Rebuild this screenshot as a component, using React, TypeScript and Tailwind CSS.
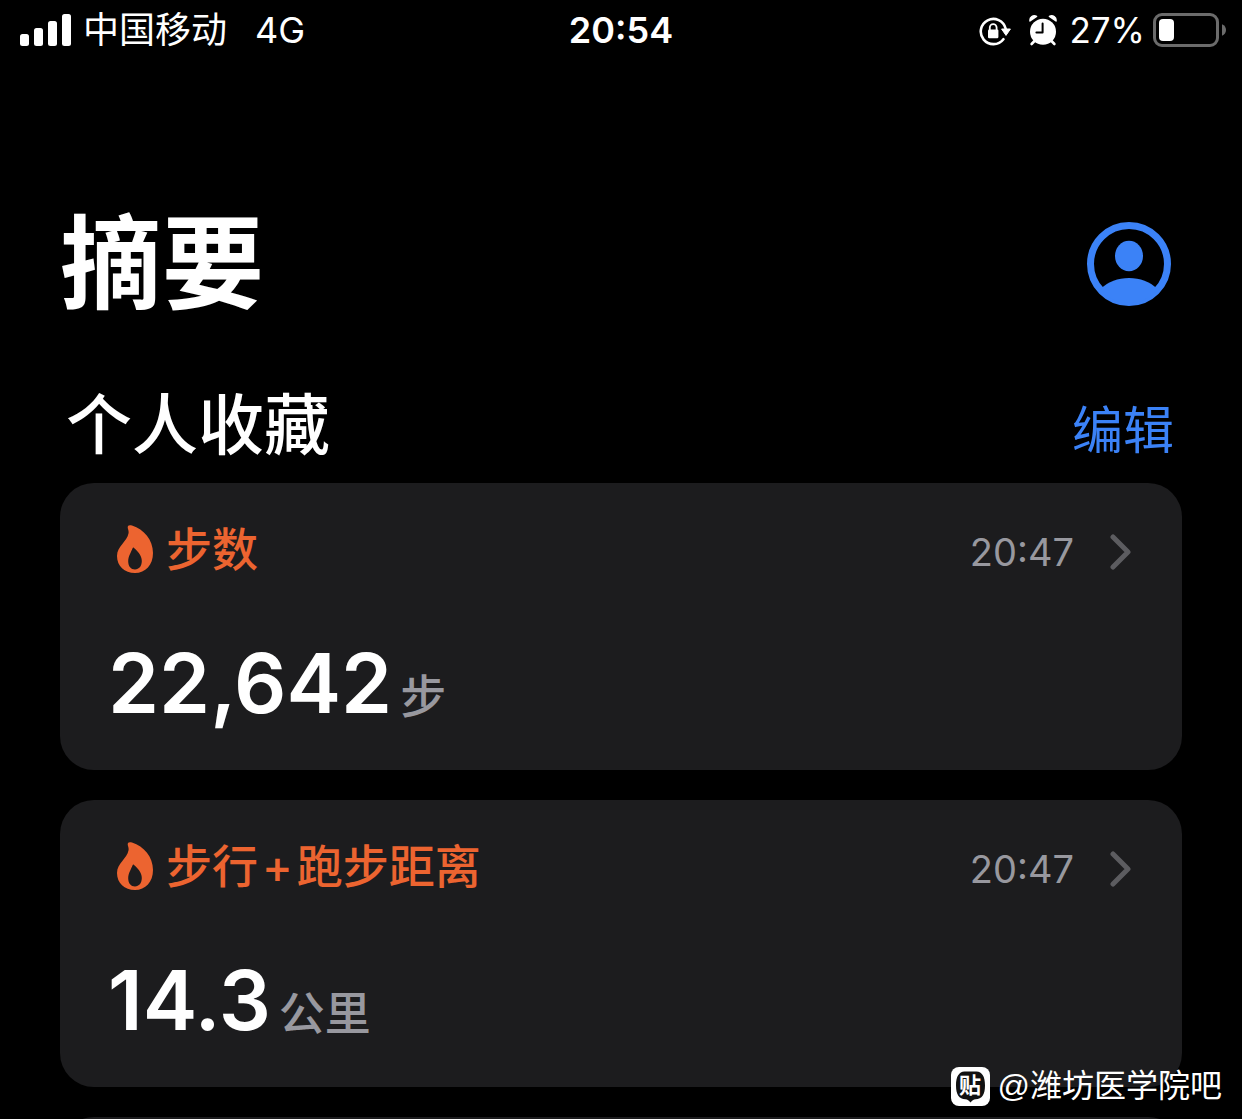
import type { ReactNode } from 'react'

interface Metric {
  id: string
  name: ReactNode
  time: string
  value: string
  unit: string
}

const METRICS: Metric[] = [
  { id: 'steps', name: '步数', time: '20:47', value: '22,642', unit: '步' },
  {
    id: 'distance',
    name: (
      <>
        步行<span className="mx-1">+</span>跑步距离
      </>
    ),
    time: '20:47',
    value: '14.3',
    unit: '公里',
  },
]

function SignalIcon() {
  return (
    <svg width="51" height="32" viewBox="0 0 51 32" fill="currentColor" role="img" aria-label="信号">
      <rect x="0" y="20" width="9" height="12" rx="2.5" />
      <rect x="14" y="14" width="9" height="18" rx="2.5" />
      <rect x="28" y="7" width="9" height="25" rx="2.5" />
      <rect x="42" y="0" width="9" height="32" rx="2.5" />
    </svg>
  )
}

function RotationLockIcon() {
  return (
    <svg width="32" height="32" viewBox="0 0 32 32" fill="none" role="img" aria-label="方向锁定">
      <path d="M24.4 25.2A12.6 12.6 0 1 1 26.6 14.5" stroke="currentColor" strokeWidth="2.6" strokeLinecap="round" />
      <path d="M22.6 15H31.4L27 21.4Z" fill="currentColor" stroke="currentColor" strokeWidth="1" strokeLinejoin="round" />
      <rect x="9" y="15.6" width="10.4" height="8.6" rx="1.2" fill="currentColor" />
      <path d="M10.8 16.5V13.6a3.4 3.4 0 0 1 6.8 0V16.5" stroke="currentColor" strokeWidth="1.8" />
    </svg>
  )
}

function AlarmIcon() {
  return (
    <svg width="28" height="32" viewBox="0 0 28 32" fill="none" role="img" aria-label="闹钟">
      <path d="M5.5 27 2.6 30M22.5 27l2.9 3" stroke="currentColor" strokeWidth="2.6" strokeLinecap="round" />
      <circle cx="14" cy="17.8" r="13" fill="currentColor" />
      <path d="M1 7A4.4 4.4 0 0 1 7.6 2.4Z" fill="currentColor" stroke="currentColor" strokeWidth="1.4" strokeLinejoin="round" />
      <path d="M27 7A4.4 4.4 0 0 0 20.4 2.4Z" fill="currentColor" stroke="currentColor" strokeWidth="1.4" strokeLinejoin="round" />
      <path d="M13.6 9.6V18.4H7.4" stroke="#000" strokeWidth="2" strokeLinecap="round" strokeLinejoin="round" />
    </svg>
  )
}

function BatteryIcon() {
  return (
    <svg width="73" height="34" viewBox="0 0 73 34" fill="none" role="img" aria-label="电池">
      <rect x="1.5" y="1.5" width="63" height="31" rx="7.5" stroke="#6b6b6b" strokeWidth="3" />
      <rect x="6" y="6" width="15" height="22" rx="4" fill="#fff" />
      <path d="M69 11.3C71.6 12.3 73 14.5 73 17s-1.4 4.7-4 5.7Z" fill="#6b6b6b" />
    </svg>
  )
}

function ProfileIcon() {
  return (
    <svg width="84" height="84" viewBox="0 0 84 84" fill="none" aria-hidden="true">
      <circle cx="42" cy="42" r="38.5" stroke="currentColor" strokeWidth="7" />
      <ellipse cx="42" cy="34" rx="14" ry="15.3" fill="currentColor" />
      <path d="M14 67C21 59.5 31 56 42 56s21 3.5 28 11C63 76 53 81 42 81S21 76 14 67Z" fill="currentColor" />
    </svg>
  )
}

function FlameIcon() {
  return (
    <svg width="36" height="48" viewBox="0 0 36 48" fill="currentColor" aria-hidden="true">
      <path
        fillRule="evenodd"
        d="M11.2 0.8C12 0 13.5 0 15 0.6C27 4.5 36 15 36 28C36 40 28.5 48 18 48C7.5 48 0 41 0 31C0 21 10 17 11.6 8C12 5 9.8 2.6 11.2 0.8ZM15.6 23.2C14 27.500 11.2 31 11.2 36.2C11.2 41.4 14 44.4 18 44.4C22 44.4 24.8 41.2 24.8 36C24.8 30.500 21 26.500 17 22.9C16.4 22.4 15.9 22.500 15.6 23.2Z"
      />
    </svg>
  )
}

function ChevronIcon() {
  return (
    <svg width="22" height="36" viewBox="0 0 22 36" fill="none" aria-hidden="true">
      <path d="M3 3 18 18 3 33" stroke="#5c5c60" strokeWidth="5" strokeLinecap="round" strokeLinejoin="round" />
    </svg>
  )
}

function TiebaLogo() {
  return (
    <span className="relative flex size-[39px] items-center justify-center">
      <svg className="absolute inset-0" width="39" height="39" viewBox="0 0 39 39" fill="none" aria-hidden="true">
        <rect width="39" height="39" rx="8" fill="#fff" />
        <path d="M13.5 4.5H25.5C31 5 34 9 34 18.5C34 27.5 31 32 24.5 32.3C22.5 32.5 21 33.5 19.5 35.5C18 33.5 16.5 32.5 14.5 32.3C8 32 5 27.5 5 18.5C5 9 8 5 13.5 4.5Z" fill="#111" />
      </svg>
      <span className="relative text-[22px] leading-none font-bold">贴</span>
    </span>
  )
}

function StatusBar() {
  return (
    <header className="grid grid-cols-[1fr_auto_1fr] items-center px-4 pt-3 text-4xl leading-9">
      <div className="flex items-center gap-3 pl-1">
        <SignalIcon />
        <span>中国移动</span>
        <span className="ml-4">4G</span>
      </div>
      <time className="font-semibold">20:54</time>
      <div className="flex items-center justify-end gap-2 text-[35px]">
        <RotationLockIcon />
        <span className="mr-1 ml-2.5">
          <AlarmIcon />
        </span>
        <span>27%</span>
        <BatteryIcon />
      </div>
    </header>
  )
}

function MetricCard({ metric }: { metric: Metric }) {
  return (
    <li>
      <button type="button" className="block w-full rounded-[34px] bg-[#1c1c1e] pt-9 pr-[50px] pb-9 pl-12 text-left">
        <span className="flex items-center">
          <span className="ml-[9px] text-[#ec6430]">
            <FlameIcon />
          </span>
          <span className="ml-[13px] text-[46px] leading-[60px] font-medium text-[#ec6430]">{metric.name}</span>
          <span className="ml-auto flex items-center gap-9 pt-1.5 text-[38px] leading-[54px] text-[#98989f]">
            {metric.time}
            <ChevronIcon />
          </span>
        </span>
        <span className="mt-[55px] flex items-baseline gap-2">
          <span className="text-[82px] leading-[100px] font-semibold">{metric.value}</span>
          <span className="text-[46px] leading-[60px] font-medium text-[#98989f]">{metric.unit}</span>
        </span>
      </button>
    </li>
  )
}

export default function App() {
  return (
    <div className="relative h-screen overflow-hidden bg-black font-[Inter,'Noto_Sans_CJK_SC',sans-serif] text-white" lang="zh-CN">
      <StatusBar />

      <main className="px-[60px] pt-[156px]">
        <div className="flex items-center justify-between pr-[11px]">
          <h1 className="text-[102px] leading-[120px] font-bold">摘要</h1>
          <button type="button" aria-label="个人资料" className="text-[#3b82f7]">
            <ProfileIcon />
          </button>
        </div>

        <section className="mt-[53px]">
          <div className="flex items-baseline justify-between pr-2 pl-1.5">
            <h2 className="text-[66px] leading-[96px] font-medium">个人收藏</h2>
            <button type="button" className="text-[51px] leading-[60px] text-[#3b82f7]">
              编辑
            </button>
          </div>

          <ul className="mt-[10px] flex flex-col gap-[30px]">
            {METRICS.map((metric) => (
              <MetricCard key={metric.id} metric={metric} />
            ))}
            {/* next card, only its top edge is in view */}
            <li className="h-72 rounded-[34px] bg-[#1c1c1e]" />
          </ul>
        </section>
      </main>

      <div className="absolute right-5 bottom-3 flex items-center gap-2 font-['Liberation_Sans','Noto_Sans_CJK_SC',sans-serif] text-[32px] leading-[42px]">
        <TiebaLogo />
        <span>@潍坊医学院吧</span>
      </div>
    </div>
  )
}
